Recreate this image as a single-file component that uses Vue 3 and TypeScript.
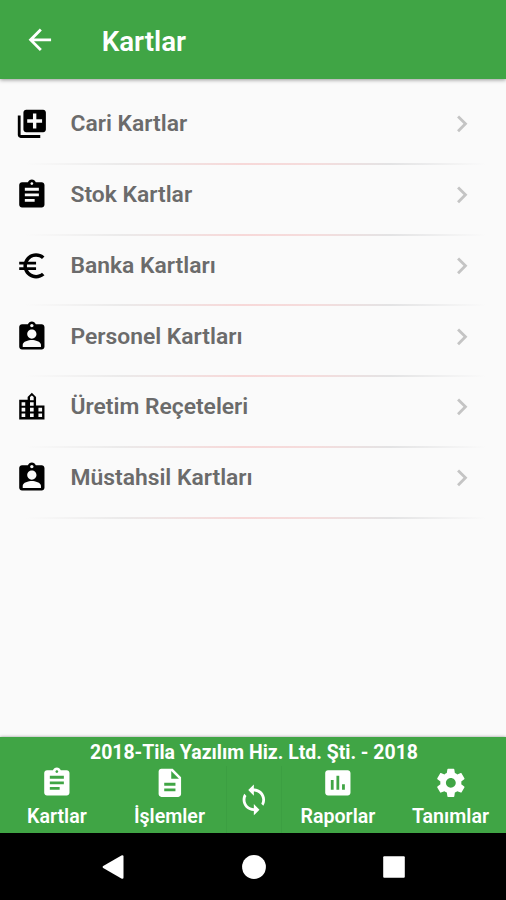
<script setup lang="ts">
interface Item {
  label: string
  icon: string
}

const icons: Record<string, string> = {
  back: 'M20 11H7.83l5.59-5.59L12 4l-8 8 8 8 1.41-1.41L7.83 13H20v-2z',
  chevron: 'M10 6L8.59 7.41 13.17 12l-4.58 4.59L10 18l6-6z',
  add: 'M4 6H2v14c0 1.1.9 2 2 2h14v-2H4V6zm16-4H8c-1.1 0-2 .9-2 2v12c0 1.1.9 2 2 2h12c1.1 0 2-.9 2-2V4c0-1.1-.9-2-2-2zm-.7 9.2h-4.1v4.1h-2.4v-4.1H8.7V8.8h4.1V4.7h2.4v4.1h4.1v2.4z',
  assignment:
    'M19 3h-4.18C14.4 1.84 13.3 1 12 1c-1.3 0-2.4.84-2.82 2H5c-1.1 0-2 .9-2 2v14c0 1.1.9 2 2 2h14c1.1 0 2-.9 2-2V5c0-1.1-.9-2-2-2zm-7 0c.55 0 1 .45 1 1s-.45 1-1 1-1-.45-1-1 .45-1 1-1zm2 14H7v-2h7v2zm3-4H7v-2h10v2zm0-4H7V7h10v2z',
  euro: 'M15 18.5c-2.51 0-4.68-1.42-5.76-3.5H15v-2H8.58c-.05-.33-.08-.66-.08-1s.03-.67.08-1H15V9H9.24C10.32 6.92 12.5 5.5 15 5.5c1.61 0 3.09.59 4.23 1.57L21 5.3C19.41 3.87 17.3 3 15 3c-3.92 0-7.24 2.51-8.48 6H3v2h3.06c-.04.33-.06.66-.06 1s.02.67.06 1H3v2h3.52c1.24 3.49 4.56 6 8.48 6 2.31 0 4.41-.87 6-2.3l-1.78-1.77c-1.13.98-2.6 1.57-4.22 1.57z',
  person:
    'M19 3h-4.18C14.4 1.84 13.3 1 12 1c-1.3 0-2.4.84-2.82 2H5c-1.1 0-2 .9-2 2v14c0 1.1.9 2 2 2h14c1.1 0 2-.9 2-2V5c0-1.1-.9-2-2-2zm-7-.2c.66 0 1.2.54 1.2 1.2s-.54 1.2-1.2 1.2-1.2-.54-1.2-1.2.54-1.2 1.2-1.2zm0 3.9c1.82 0 3.3 1.48 3.3 3.3s-1.48 3.3-3.3 3.3-3.3-1.48-3.3-3.3 1.48-3.3 3.3-3.3zm6.5 12.6h-13v-1.7c0-2.3 4.2-3.4 6.5-3.4s6.5 1.1 6.5 3.4v1.7z',
  city: 'M15 11V5l-3-3-3 3v2H3v14h18V11h-6zm-7.7 8.3H4.7v-2.6h2.6v2.6zm0-4H4.7v-2.6h2.6v2.6zm0-4H4.7V8.7h2.6v2.6zm6 8h-2.6v-2.6h2.6v2.6zm0-4h-2.6v-2.6h2.6v2.6zm0-4h-2.6V8.7h2.6v2.6zm0-4h-2.6V4.9l1.3-1 1.3 1v2.4zm6 12h-2.6v-2.6h2.6v2.6zm0-4h-2.6v-2.6h2.6v2.6z',
  document:
    'M14 2H6c-1.1 0-1.99.9-1.99 2L4 20c0 1.1.89 2 1.99 2H18c1.1 0 2-.9 2-2V8l-6-6zm2 16H8v-2h8v2zm0-4H8v-2h8v2zm-3-5V3.5L18.5 9H13z',
  chart:
    'M19 3H5c-1.1 0-2 .9-2 2v14c0 1.1.9 2 2 2h14c1.1 0 2-.9 2-2V5c0-1.1-.9-2-2-2zM9 17H7v-7h2v7zm4 0h-2V7h2v10zm4 0h-2v-4h2v4z',
  gear: 'M19.43 12.98c.04-.32.07-.64.07-.98s-.03-.66-.07-.98l2.11-1.65c.19-.15.24-.42.12-.64l-2-3.46c-.12-.22-.39-.3-.61-.22l-2.49 1c-.52-.4-1.08-.73-1.69-.98l-.38-2.65C14.46 2.18 14.25 2 14 2h-4c-.25 0-.46.18-.49.42l-.38 2.65c-.61.25-1.17.59-1.69.98l-2.49-1c-.23-.09-.49 0-.61.22l-2 3.46c-.13.22-.07.49.12.64l2.11 1.65c-.04.32-.07.65-.07.98s.03.66.07.98l-2.11 1.65c-.19.15-.24.42-.12.64l2 3.46c.12.22.39.3.61.22l2.49-1c.52.4 1.08.73 1.69.98l.38 2.65c.03.24.24.42.49.42h4c.25 0 .46-.18.49-.42l.38-2.65c.61-.25 1.17-.59 1.69-.98l2.49 1c.23.09.49 0 .61-.22l2-3.46c.12-.22.07-.49-.12-.64l-2.11-1.65zM12 15.5c-1.93 0-3.5-1.57-3.5-3.5s1.57-3.5 3.5-3.5 3.5 1.57 3.5 3.5-1.57 3.5-3.5 3.5z',
  sync: 'M12 4V1L8 5l4 4V6c3.31 0 6 2.69 6 6 0 1.01-.25 1.97-.7 2.8l1.46 1.46C19.54 15.03 20 13.57 20 12c0-4.42-3.58-8-8-8zm0 14c-3.31 0-6-2.69-6-6 0-1.01.25-1.97.7-2.8L5.24 7.74C4.46 8.97 4 10.43 4 12c0 4.42 3.58 8 8 8v3l4-4-4-4v3z',
}

const cards: Item[] = [
  { label: 'Cari Kartlar', icon: 'add' },
  { label: 'Stok Kartlar', icon: 'assignment' },
  { label: 'Banka Kartları', icon: 'euro' },
  { label: 'Personel Kartları', icon: 'person' },
  { label: 'Üretim Reçeteleri', icon: 'city' },
  { label: 'Müstahsil Kartları', icon: 'person' },
]

const leftTabs: Item[] = [
  { label: 'Kartlar', icon: 'assignment' },
  { label: 'İşlemler', icon: 'document' },
]

const rightTabs: Item[] = [
  { label: 'Raporlar', icon: 'chart' },
  { label: 'Tanımlar', icon: 'gear' },
]
</script>

<template>
  <div class="screen">
    <header class="app-bar">
      <svg class="icon" viewBox="0 0 24 24"><path :d="icons.back" /></svg>
      <h1>Kartlar</h1>
    </header>

    <main class="list">
      <div v-for="card in cards" :key="card.label" class="row">
        <svg class="icon" viewBox="0 0 24 24"><path :d="icons[card.icon]" /></svg>
        <span class="row-label">{{ card.label }}</span>
        <svg class="icon chevron" viewBox="0 0 24 24"><path :d="icons.chevron" /></svg>
      </div>
    </main>

    <footer class="footer">
      <div class="company">2018-Tila Yazılım Hiz. Ltd. Şti. - 2018</div>
      <nav class="tabs">
        <div v-for="tab in leftTabs" :key="tab.label" class="tab">
          <svg class="icon" viewBox="0 0 24 24"><path :d="icons[tab.icon]" /></svg>
          <span>{{ tab.label }}</span>
        </div>
        <div class="sync">
          <svg class="icon" viewBox="0 0 24 24"><path :d="icons.sync" /></svg>
        </div>
        <div v-for="tab in rightTabs" :key="tab.label" class="tab">
          <svg class="icon" viewBox="0 0 24 24"><path :d="icons[tab.icon]" /></svg>
          <span>{{ tab.label }}</span>
        </div>
      </nav>
    </footer>

    <div class="system-bar">
      <svg viewBox="0 0 24 24"><path d="M2.2 11.1 20.4.5Q22.5-.3 22.5 1.6V22.4Q22.5 24.3 20.4 23.5L2.2 12.9Q1 12 2.2 11.1z" /></svg>
      <svg viewBox="0 0 24 24"><circle cx="12" cy="12" r="11.9" /></svg>
      <svg viewBox="0 0 24 24"><rect x="1.2" y="1.2" width="21.6" height="21.6" rx="1" /></svg>
    </div>
  </div>
</template>

<style>
body {
  margin: 0;
}
</style>

<style scoped>
.screen {
  display: flex;
  flex-direction: column;
  width: 506px;
  height: 900px;
  overflow: hidden;
  background: #fafafa;
  font-family: Roboto, 'Liberation Sans', sans-serif;
}

.icon {
  display: block;
  flex: none;
  width: 33.7px;
  height: 33.7px;
  fill: currentColor;
}

.app-bar {
  display: flex;
  align-items: center;
  box-sizing: border-box;
  height: 79px;
  flex: none;
  padding: 1px 0 0 23px;
  gap: 45px;
  background: #40a545;
  color: #fff;
  box-shadow: 0 1px 4px rgba(0, 0, 0, 0.4);
}

h1 {
  margin: 4px 0 0;
  font-size: 27.7px;
  font-weight: 600;
  line-height: 32px;
}

.list {
  flex: 1;
  padding-top: 15px;
}

.row {
  display: flex;
  align-items: center;
  box-sizing: border-box;
  height: 70.8px;
  padding: 0 27px 10.8px 14.8px;
  color: #000;
  background: linear-gradient(
      90deg,
      rgba(225, 225, 225, 0) 5%,
      #ebeaea 24%,
      #f7d8d8 48%,
      #f5dcdc 62%,
      #e3e3e4 77%,
      rgba(225, 225, 225, 0) 96%
    )
    bottom / 100% 2px no-repeat;
}

.row-label {
  flex: 1;
  margin: 0.4px 0 0 22px;
  font-size: 22.85px;
  font-weight: 600;
  line-height: 28px;
  color: #6b6b6b;
}

.chevron {
  color: #c4c4c4;
}

.footer {
  flex: none;
  box-sizing: border-box;
  height: 96.4px;
  background: #40a545;
  color: #fff;
  box-shadow: 0 0 3px rgba(0, 0, 0, 0.4);
}

.company {
  height: 28.6px;
  line-height: 31px;
  text-align: center;
  font-size: 19.45px;
  font-weight: 700;
  padding-left: 2px;
}

.tabs {
  display: flex;
  height: 67.8px;
  margin: 0 -0.7px 0 0.7px;
}

.tab {
  flex: 1;
  display: flex;
  flex-direction: column;
  align-items: center;
  font-size: 19.6px;
  font-weight: 600;
  line-height: 24px;
}

.tab span {
  margin-top: 6px;
}

.sync {
  display: flex;
  align-items: center;
  justify-content: center;
  box-sizing: border-box;
  width: 56px;
  border: solid #3c9f42;
  border-width: 0 1px;
}

.system-bar {
  flex: none;
  display: flex;
  align-items: center;
  justify-content: center;
  gap: 116.5px;
  height: 66.6px;
  padding-left: 1px;
  background: #000;
  fill: #fff;
}

.system-bar svg {
  width: 24px;
  height: 24px;
}
</style>
